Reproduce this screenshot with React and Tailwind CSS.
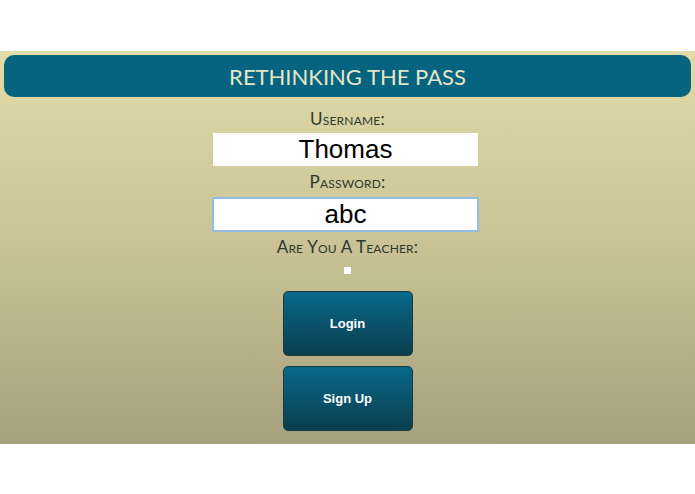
import { useState } from 'react';

const labelCls =
  "flex items-center justify-center text-[17px] text-[#2c3a2c] [font-variant:small-caps] tracking-[0.2px]";

export default function App() {
  const [form, setForm] = useState({ username: "Thomas", password: "abc", teacher: false });

  const handleForm = (e) => {
    const { name, value, type, checked } = e.target;
    setForm({ ...form, [name]: type === "checkbox" ? checked : value });
  };

  return (
    <div className="w-[695px] h-[494px] bg-white font-['Lato','Liberation_Sans',sans-serif]">
      <div className="h-[51px] bg-white"></div>
      {/* main panel */}
      <div className="h-[393px] px-1 pt-1 bg-gradient-to-b from-[#e1dca9] via-[#c8c296] to-[#a6a17d] flex flex-col items-center">
        <div className="w-full h-[42px] rounded-[10px] bg-[#066481] flex items-center justify-center">
          <h1 className="text-[22px] text-[#e6e6c6]">RETHINKING THE PASS</h1>
        </div>

        <label htmlFor="username" className={labelCls + " mt-[8px] h-[28px]"}>Username:</label>
        <input
          id="username"
          name="username"
          type="text"
          value={form.username}
          onChange={handleForm}
          className="-ml-[4px] w-[265px] h-[33px] bg-white text-center text-[26px] text-black font-['Liberation_Sans',sans-serif] outline-none"
        />

        <label htmlFor="password" className={labelCls + " h-[31px]"}>Password:</label>
        <input
          id="password"
          name="password"
          type="text"
          autoFocus
          value={form.password}
          onChange={handleForm}
          className="-ml-[4px] w-[267px] h-[35px] bg-white border-2 border-[#92bde3] rounded-[2px] text-center text-[26px] text-black caret-black font-['Liberation_Sans',sans-serif] outline-none"
        />

        <label htmlFor="teacher" className={labelCls + " h-[30px]"}>Are You A Teacher:</label>
        <input
          id="teacher"
          name="teacher"
          type="checkbox"
          checked={form.teacher}
          onChange={handleForm}
          className="appearance-none mt-[5px] w-[7px] h-[7px] bg-white"
        />

        <button
          type="button"
          className="mt-[17px] w-[130px] h-[65px] rounded-[5px] border border-[#1d3b3d] bg-gradient-to-b from-[#07698a] to-[#0a3e4f] text-white text-[13px] font-bold font-['Liberation_Sans',sans-serif]"
        >
          Login
        </button>
        <button
          type="button"
          className="mt-[10px] w-[130px] h-[65px] rounded-[5px] border border-[#1d3b3d] bg-gradient-to-b from-[#07698a] to-[#0a3e4f] text-white text-[13px] font-bold font-['Liberation_Sans',sans-serif]"
        >
          Sign Up
        </button>
      </div>
    </div>
  );
}
